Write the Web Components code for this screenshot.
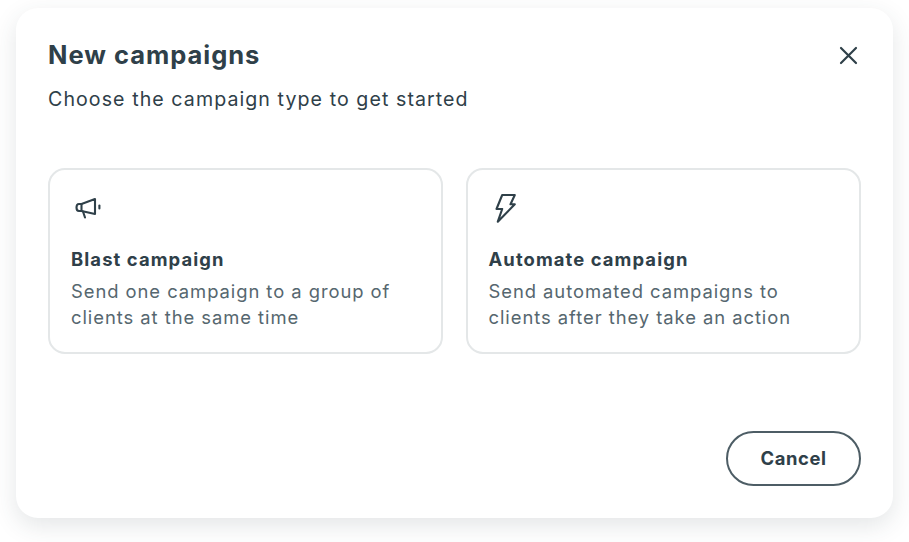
<!DOCTYPE html>
<html>
<head>
<meta charset="utf-8">
<style>
  html, body { margin: 0; background: #fff; }
  body { font-family: Inter, "Liberation Sans", sans-serif; color: #2f3f47; min-height: 542px; display: flow-root; overflow: hidden; }
</style>
</head>
<body>
<campaign-modal heading="New campaigns" subheading="Choose the campaign type to get started">
  <campaign-card heading="Blast campaign">
    <svg slot="icon" width="30" height="30" viewBox="0 0 30 30" fill="none" stroke="#2f4049" stroke-width="2.1" stroke-linejoin="round" stroke-linecap="round">
      <path d="M22 6 L22 21 L8.5 18 L6 18 Q3.5 18 3.5 14.5 Q3.5 11 6 11 L8.5 11 Z"/>
      <path d="M8.5 11 L8.5 18"/>
      <path d="M10 18.5 L12 24.5"/>
      <path d="M26.4 12.6 L26.4 15.4"/>
    </svg>
    Send one campaign to a group of clients at the same time
  </campaign-card>
  <campaign-card heading="Automate campaign">
    <svg slot="icon" width="30" height="30" viewBox="0 0 30 30" fill="none" stroke="#2f4049" stroke-width="2.1" stroke-linejoin="round" stroke-linecap="round">
      <path d="M11.2 2 L23.8 2 L19.5 11.3 L23.8 11.3 L6.8 28.7 L11.2 16 L5.5 16 Z"/>
    </svg>
    Send automated campaigns to clients after they take an action
  </campaign-card>
</campaign-modal>

<script>
const cardTemplate = document.createElement('template');
cardTemplate.innerHTML = `
  <style>
    :host {
      display: block;
      box-sizing: border-box;
      height: 186px;
      padding: 23px 21px 0 21px;
      background: #fff;
      border: 2px solid #e4e7e8;
      border-radius: 17px;
    }
    .icon { display: block; height: 30px; margin-left: 2px; }
    h3 {
      margin: 24px 0 0;
      font-size: 18.4px;
      line-height: 24px;
      font-weight: 650;
      letter-spacing: 1.1px;
      color: #2f4049;
    }
    p {
      margin: 7px 0 0;
      font-size: 18.4px;
      line-height: 26px;
      font-weight: 400;
      letter-spacing: 0.95px;
      color: #56676f;
    }
  </style>
  <span class="icon"><slot name="icon"></slot></span>
  <h3></h3>
  <p><slot></slot></p>
`;

class CampaignCard extends HTMLElement {
  constructor() {
    super();
    this.attachShadow({ mode: 'open' });
    this.shadowRoot.append(cardTemplate.content.cloneNode(true));
    this.shadowRoot.querySelector('h3').textContent = this.getAttribute('heading');
  }
}

const buttonTemplate = document.createElement('template');
buttonTemplate.innerHTML = `
  <style>
    :host {
      display: inline-flex;
      align-items: center;
      justify-content: center;
      box-sizing: border-box;
      width: 135px;
      height: 55px;
      padding-bottom: 2px;
      border: 2px solid #4d5d65;
      border-radius: 28px;
      font-size: 18.4px;
      font-weight: 650;
      letter-spacing: 0.6px;
      color: #2f4049;
      cursor: pointer;
    }
  </style>
  <slot></slot>
`;

class PillButton extends HTMLElement {
  constructor() {
    super();
    this.attachShadow({ mode: 'open' });
    this.shadowRoot.append(buttonTemplate.content.cloneNode(true));
  }
}

const modalTemplate = document.createElement('template');
modalTemplate.innerHTML = `
  <style>
    :host {
      display: block;
      box-sizing: border-box;
      width: 877px;
      height: 510px;
      margin: 8px 0 0 16px;
      padding: 30px 32px 32px;
      background: #fff;
      border-radius: 22px;
      box-shadow: 0 8px 24px rgba(47, 64, 73, 0.13);
    }
    header { display: flex; justify-content: space-between; align-items: flex-start; }
    h2 {
      margin: 0;
      font-size: 25.5px;
      line-height: 34px;
      font-weight: 650;
      letter-spacing: 0.98px;
      color: #2f4049;
    }
    .sub {
      margin: 14px 0 0;
      font-size: 19.6px;
      line-height: 26px;
      letter-spacing: 1.07px;
      color: #2f4049;
    }
    .close { display: block; margin: 7px 3px 0 0; }
    .cards {
      display: grid;
      grid-template-columns: 395px 395px;
      column-gap: 22.5px;
      margin-top: 56px;
    }
    footer { display: flex; justify-content: flex-end; margin-top: 77px; }
  </style>
  <header>
    <h2></h2>
    <svg class="close" width="20" height="20" viewBox="0 0 20 20" fill="none" stroke="#2f4049" stroke-width="2.2" stroke-linecap="round">
      <path d="M3 3 L18 18 M18 3 L3 18"/>
    </svg>
  </header>
  <p class="sub"></p>
  <div class="cards"><slot></slot></div>
  <footer><pill-button>Cancel</pill-button></footer>
`;

class CampaignModal extends HTMLElement {
  constructor() {
    super();
    this.attachShadow({ mode: 'open' });
    this.shadowRoot.append(modalTemplate.content.cloneNode(true));
    this.shadowRoot.querySelector('h2').textContent = this.getAttribute('heading');
    this.shadowRoot.querySelector('.sub').textContent = this.getAttribute('subheading');
  }
}

window.customElements.define('campaign-card', CampaignCard);
window.customElements.define('pill-button', PillButton);
window.customElements.define('campaign-modal', CampaignModal);
</script>
</body>
</html>
